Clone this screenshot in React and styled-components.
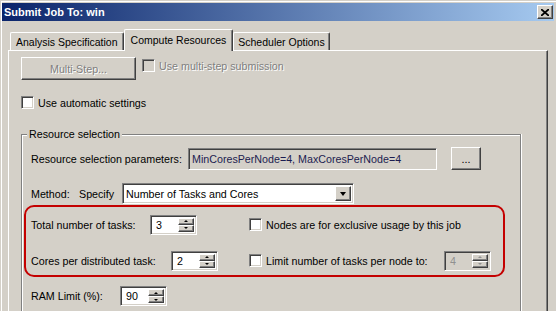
import React from 'react';
import styled, { createGlobalStyle, css } from 'styled-components';

const Global = createGlobalStyle`
  html, body { margin: 0; padding: 0; background: #D4D0C8; overflow: hidden; }
  body { font-family: "Liberation Sans", Arial, sans-serif; font-size: 10.7px; color: #000; }
  * { box-sizing: border-box; }
`;

const raised = css`
  background: #D4D0C8;
  border: 1px solid;
  border-color: #fff #404040 #404040 #fff;
  box-shadow: inset -1px -1px 0 #808080;
`;

const sunken = css`
  border: 1px solid;
  border-color: #808080 #fff #fff #808080;
  box-shadow: inset 1px 1px 0 #404040, inset -1px -1px 0 #D4D0C8;
`;

const Window = styled.div`
  width: 556px;
  height: 311px;
  overflow: hidden;
  background: #D4D0C8;
  padding: 3px 2px 0 2px;
  display: flex;
  flex-direction: column;
  box-shadow: inset 1px 1px 0 #D4D0C8, inset 2px 2px 0 #fff;
`;

const TitleBar = styled.div`
  flex: none;
  height: 18px;
  background: linear-gradient(to right, #0A246A, #A6CAF0);
  display: flex;
  align-items: center;
  justify-content: space-between;
  padding: 0 1px 0 2px;
  color: #fff;
  font-weight: bold;
  font-size: 11px;
`;

const CloseButton = styled.div`
  ${raised};
  width: 16px;
  height: 14px;
  display: flex;
  align-items: center;
  justify-content: center;
`;

const Body = styled.div`
  flex: 1;
  display: flex;
  flex-direction: column;
  padding: 8px 6px 0 6px;
  min-height: 0;
`;

const TabStrip = styled.div`
  display: flex;
  align-items: flex-end;
  height: 21px;
  padding-left: 2px;
  position: relative;
  z-index: 1;
`;

const Tab = styled.div`
  height: ${p => (p.$active ? '22px' : '18px')};
  margin-bottom: ${p => (p.$active ? '-1px' : '0')};
  padding: ${p => (p.$active ? '0 6px 1px' : `0 ${p.$pad || 5}px`)};
  background: #D4D0C8;
  border-top: 1px solid #fff;
  border-left: 1px solid #fff;
  border-right: 1px solid #404040;
  box-shadow: inset -1px 0 0 #808080;
  border-radius: 2px 2px 0 0;
  display: flex;
  align-items: center;
  white-space: nowrap;
  font-size: 10.5px;
`;

const Panel = styled.div`
  flex: 1;
  background: #D4D0C8;
  border-top: 1px solid #fff;
  border-left: 1px solid #fff;
  border-right: 1px solid #404040;
  box-shadow: inset -1px 0 0 #808080;
  padding: 6px 0 0 12px;
  display: flex;
  flex-direction: column;
  align-items: flex-start;
`;

const Row = styled.div`
  display: flex;
  align-items: ${p => p.$align || 'center'};
  margin-top: ${p => p.$mt || 0}px;
  padding-left: ${p => p.$pl || 0}px;
`;

const Button = styled.div`
  ${raised};
  width: ${p => p.$w}px;
  height: 23px;
  display: flex;
  align-items: center;
  justify-content: center;
  color: ${p => (p.$disabled ? '#808080' : '#000')};
  text-shadow: ${p => (p.$disabled ? '1px 1px 0 #fff' : 'none')};
  margin-left: ${p => p.$ml || 0}px;
`;

const CheckLabel = styled.label`
  display: flex;
  align-items: center;
  height: 17px;
  gap: 4px;
  margin-left: ${p => p.$ml || 0}px;
  width: ${p => (p.$w ? `${p.$w}px` : 'auto')};
  color: ${p => (p.$disabled ? '#808080' : '#000')};
  text-shadow: ${p => (p.$disabled ? '1px 1px 0 #fff' : 'none')};
  white-space: nowrap;
`;

const CheckBox = styled.span`
  ${sunken};
  flex: none;
  width: 13px;
  height: 13px;
  background: ${p => (p.$disabled ? '#D4D0C8' : '#fff')};
`;

const GroupBox = styled.div`
  align-self: flex-start;
  width: 500px;
  margin-top: 23px;
  border: 1px solid #808080;
  border-bottom: none;
  box-shadow: inset 1px 1px 0 #fff, 1px 0 0 #fff;
  padding: 0 0 20px 2px;
  display: flex;
  flex-direction: column;
  align-items: flex-start;
`;

const GroupTitle = styled.div`
  margin: -7px 0 0 3px;
  padding: 0 2px;
  line-height: 13px;
  background: #D4D0C8;
`;

const Label = styled.span`
  flex: none;
  width: ${p => (p.$w ? `${p.$w}px` : 'auto')};
  white-space: nowrap;
`;

const ReadOnlyField = styled.div`
  ${sunken};
  width: 249px;
  height: 22px;
  background: #D4D0C8;
  display: flex;
  align-items: center;
  padding-left: 3px;
  color: #1c1c50;
  white-space: nowrap;
`;

const Combo = styled.div`
  ${sunken};
  width: 232px;
  height: 21px;
  background: #fff;
  display: flex;
  align-items: stretch;
  padding: 2px;
`;

const ComboText = styled.span`
  flex: 1;
  padding-left: 1px;
  display: flex;
  align-items: center;
`;

const ComboButton = styled.div`
  ${raised};
  width: 16px;
  display: flex;
  align-items: center;
  justify-content: center;
`;

const Arrow = styled.span`
  width: 0;
  height: 0;
  border-left: ${p => p.$size}px solid transparent;
  border-right: ${p => p.$size}px solid transparent;
  ${p =>
    p.$up
      ? `border-bottom: ${p.$h}px solid ${p.$color || '#000'};`
      : `border-top: ${p.$h}px solid ${p.$color || '#000'};`}
`;

const Highlight = styled.div`
  width: 481px;
  margin-top: 1px;
  border: 2px solid #C40000;
  border-radius: 10px;
  padding: 7px 0 4px 5px;
  display: grid;
  grid-template-columns: 218px 1fr;
  row-gap: 15px;
  align-items: center;
`;

const Cell = styled.div`
  display: flex;
  align-items: center;
  height: 21px;
`;

const Spin = styled.div`
  ${sunken};
  flex: none;
  width: 47px;
  height: ${p => p.$h || 20}px;
  padding: 2px;
  display: flex;
  align-items: stretch;
  background: ${p => (p.$disabled ? '#D4D0C8' : '#fff')};
`;

const SpinValue = styled.span`
  flex: 1;
  display: flex;
  align-items: center;
  padding-left: 3px;
  color: ${p => (p.$disabled ? '#909090' : '#000')};
`;

const SpinButtons = styled.div`
  width: 16px;
  display: flex;
  flex-direction: column;
`;

const SpinButton = styled.div`
  ${raised};
  flex: 1;
  display: flex;
  align-items: center;
  justify-content: center;
`;

function SpinBox({ value, disabled }) {
  const c = disabled ? '#909090' : '#000';
  return (
    <Spin $disabled={disabled}>
      <SpinValue $disabled={disabled}>{value}</SpinValue>
      <SpinButtons>
        <SpinButton><Arrow $up $size={2} $h={2} $color={c} /></SpinButton>
        <SpinButton><Arrow $size={2} $h={2} $color={c} /></SpinButton>
      </SpinButtons>
    </Spin>
  );
}

function Check({ children, disabled, ml, w }) {
  return (
    <CheckLabel $disabled={disabled} $ml={ml} $w={w}>
      <CheckBox $disabled={disabled} />
      <span>{children}</span>
    </CheckLabel>
  );
}

export default function App() {
  return (
    <>
      <Global />
      <Window>
        <TitleBar>
          <span>Submit Job To: win</span>
          <CloseButton>
            <svg width="8" height="7" viewBox="0 0 8 7">
              <path d="M0 0 L8 7 M8 0 L0 7" stroke="#000" strokeWidth="1.8" />
            </svg>
          </CloseButton>
        </TitleBar>
        <Body>
          <TabStrip>
            <Tab $pad={5}>Analysis Specification</Tab>
            <Tab $active>Compute Resources</Tab>
            <Tab $pad={4}>Scheduler Options</Tab>
          </TabStrip>
          <Panel>
            <Row $align="flex-start">
              <Button $w={115} $disabled>Multi-Step...</Button>
              <Check disabled ml={6}>Use multi-step submission</Check>
            </Row>
            <Row $mt={14}>
              <Check>Use automatic settings</Check>
            </Row>
            <GroupBox>
              <GroupTitle>Resource selection</GroupTitle>
              <Row $mt={6} $pl={7}>
                <Label $w={157}>Resource selection parameters:</Label>
                <ReadOnlyField>MinCoresPerNode=4, MaxCoresPerNode=4</ReadOnlyField>
                <Button $w={30} $ml={14}>...</Button>
              </Row>
              <Row $mt={13} $pl={7}>
                <Label $w={48}>Method:</Label>
                <Label $w={43}>Specify</Label>
                <Combo>
                  <ComboText>Number of Tasks and Cores</ComboText>
                  <ComboButton><Arrow $size={3.5} $h={4} /></ComboButton>
                </Combo>
              </Row>
              <Highlight>
                <Cell>
                  <Label $w={119}>Total number of tasks:</Label>
                  <SpinBox value="3" />
                </Cell>
                <Cell>
                  <Check>Nodes are for exclusive usage by this job</Check>
                </Cell>
                <Cell>
                  <Label $w={140}>Cores per distributed task:</Label>
                  <SpinBox value="2" />
                </Cell>
                <Cell>
                  <Check w={195}>Limit number of tasks per node to:</Check>
                  <SpinBox value="4" disabled />
                </Cell>
              </Highlight>
              <Row $mt={9} $pl={7}>
                <Label $w={89}>RAM Limit (%):</Label>
                <SpinBox value="90" />
              </Row>
            </GroupBox>
          </Panel>
        </Body>
      </Window>
    </>
  );
}
